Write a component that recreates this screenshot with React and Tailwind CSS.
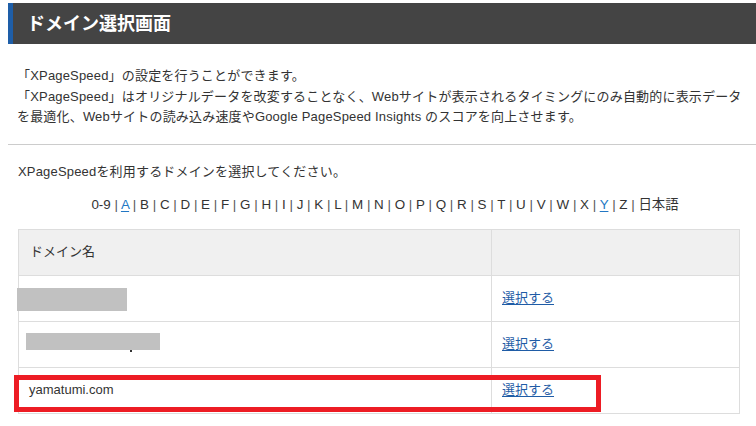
import React from "react";

const letters = ["0-9","A","B","C","D","E","F","G","H","I","J","K","L","M","N","O","P","Q","R","S","T","U","V","W","X","Y","Z","日本語"];
const linked = new Set(["A", "Y"]);

function Row({ children, link }) {
  return (
    <div className="grid grid-cols-[473px_249px] h-[46px] border-b border-[#dddddd]">
      <div className="relative flex items-center pl-[10px] border-l border-[#dddddd]">{children}</div>
      <div className="flex items-center pl-[10px] border-l border-r border-[#dddddd]">
        <a href="#" className="text-[#1f5ca6] underline underline-offset-[2px]">{link}</a>
      </div>
    </div>
  );
}

export default function App() {
  return (
    <div
      className="relative w-[756px] h-[426px] overflow-hidden bg-white text-[#333333] text-[13px]"
      style={{ fontFamily: '"Liberation Sans", Arial, "Noto Sans CJK JP", sans-serif' }}
    >
      <div className="mt-[3px] ml-[8px] h-[41px] border-l-[5px] border-[#1e5ea8] bg-[#444444] pl-[14px] flex items-center">
        <h1 className="text-white font-bold text-[18px] leading-none">ドメイン選択画面</h1>
      </div>

      <div className="pl-[17px] pt-[22px] leading-[20.5px] whitespace-nowrap tracking-[0.18px]">
        「XPageSpeed」の設定を行うことができます。<br />
        「XPageSpeed」はオリジナルデータを改変することなく、Webサイトが表示されるタイミングにのみ自動的に表示データ<br />
        を最適化、Webサイトの読み込み速度やGoogle PageSpeed Insights のスコアを向上させます。
      </div>

      <div className="ml-[8px] mt-[16px] border-t border-[#cccccc]" />

      <div className="pl-[18px] mt-[17px] leading-[20px] tracking-[0.18px]">XPageSpeedを利用するドメインを選択してください。</div>

      <div className="mt-[13px] pl-[14px] text-center text-[13.4px] leading-[20px] whitespace-nowrap">
        {letters.map((l, i) => (
          <React.Fragment key={l}>
            {i > 0 && <span className="text-[#555555]"> | </span>}
            {linked.has(l) ? (
              <a href="#" className="text-[#2277c4] underline underline-offset-[2px]">{l}</a>
            ) : (
              <span>{l}</span>
            )}
          </React.Fragment>
        ))}
      </div>

      <div className="ml-[18px] mt-[14px] w-[722px] border-t border-[#dddddd]">
        <div className="grid grid-cols-[473px_249px] h-[46px] bg-[#f0f0f0] border-b border-[#dddddd]">
          <div className="flex items-center pl-[11px] border-l border-[#dddddd]">ドメイン名</div>
          <div className="border-l border-r border-[#dddddd]" />
        </div>
        <Row link="選択する">
          <div className="absolute left-[-2px] top-[12px] w-[110px] h-[23px] bg-[#c1c1c1]" />
        </Row>
        <Row link="選択する">
          <div className="absolute left-[111px] top-[28px] w-[2px] h-[2px] bg-[#333333]" />
          <div className="absolute left-[7px] top-[11px] w-[134px] h-[17px] bg-[#c1c1c1]" />
        </Row>
        <Row link="選択する">
          <span>yamatumi.com</span>
        </Row>
      </div>

      <div className="absolute left-[14px] top-[375px] w-[587px] h-[37px] border-[5px] border-[#ed1c24]" />
    </div>
  );
}
